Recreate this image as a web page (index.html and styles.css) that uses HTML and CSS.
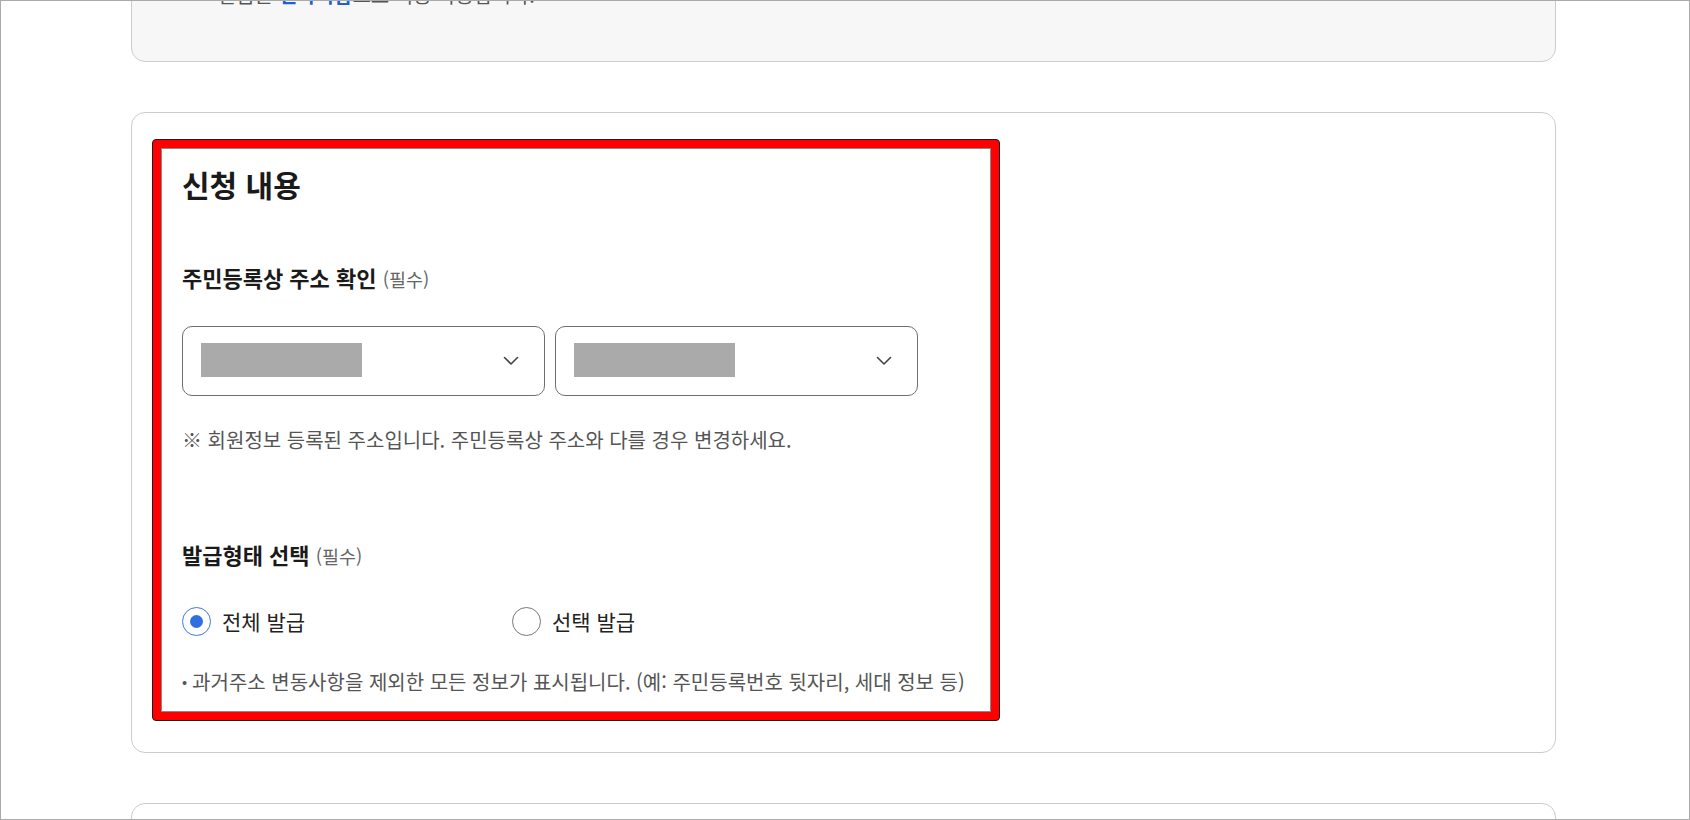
FILE: index.html
```html
<!DOCTYPE html>
<html lang="ko">
<head>
<meta charset="utf-8">
<title>신청 내용</title>
<link rel="stylesheet" href="styles.css">
</head>
<body>
<div class="frame">
  <div class="container">
    <section class="card card-info">
      <p class="info-text">발급은 <span class="link">전자지갑</span>으로 이용 가능합니다.</p>
    </section>

    <section class="card card-form">
      <div class="highlight">
        <div class="panel">
          <h2 class="title">신청 내용</h2>

          <h3 class="label">주민등록상 주소 확인 <span class="req">(필수)</span></h3>
          <div class="selects">
            <div class="select">
              <span class="masked"></span>
              <svg class="chev" width="16" height="10" viewBox="0 0 16 10"><polyline points="1.5,1.5 8,8 14.5,1.5" fill="none" stroke="#444" stroke-width="1.6" stroke-linecap="round" stroke-linejoin="round"/></svg>
            </div>
            <div class="select">
              <span class="masked"></span>
              <svg class="chev" width="16" height="10" viewBox="0 0 16 10"><polyline points="1.5,1.5 8,8 14.5,1.5" fill="none" stroke="#444" stroke-width="1.6" stroke-linecap="round" stroke-linejoin="round"/></svg>
            </div>
          </div>
          <p class="note">※ 회원정보 등록된 주소입니다. 주민등록상 주소와 다를 경우 변경하세요.</p>

          <h3 class="label label-second">발급형태 선택 <span class="req">(필수)</span></h3>
          <div class="radios">
            <label class="radio-opt">
              <span class="radio checked"><span class="dot"></span></span>
              <span class="radio-text">전체 발급</span>
            </label>
            <label class="radio-opt">
              <span class="radio"></span>
              <span class="radio-text">선택 발급</span>
            </label>
          </div>
          <p class="desc"><span class="bullet">•</span>과거주소 변동사항을 제외한 모든 정보가 표시됩니다. (예: 주민등록번호 뒷자리, 세대 정보 등)</p>
        </div>
      </div>
    </section>

    <section class="card card-next"></section>
  </div>
</div>
</body>
</html>
```
FILE: styles.css
```css
html, body {
  margin: 0;
  padding: 0;
  background: #ffffff;
}

body {
  font-family: "Noto Sans CJK KR", "Noto Sans", sans-serif;
  color: #1a1a1a;
}

.frame {
  box-sizing: border-box;
  height: 820px;
  border: 1px solid #aaaaaa;
  overflow: hidden;
}

.container {
  width: 1425px;
  margin-left: 130px;
}

.card {
  box-sizing: border-box;
  border: 1px solid #cccccc;
  border-radius: 14px;
  background: #ffffff;
}

.card-info {
  background: #f7f7f7;
  margin-top: -101px;
  height: 162px;
  padding: 80px 40px 0 86px;
}

.info-text {
  margin: 0;
  font-size: 20px;
  line-height: 28px;
  color: #555555;
}

.link {
  color: #1f5fd6;
  font-weight: 700;
}

.card-form {
  margin-top: 50px;
  padding: 26px 20px 31px;
}

.highlight {
  box-sizing: border-box;
  width: 848px;
  border: 1px solid #1e1e1e;
  border-radius: 4px;
  background: #ff0000;
  padding: 8px;
}

.panel {
  background: #ffffff;
  border: 1px solid #8a8a8a;
  padding: 15px 20px 15px;
}

.title {
  margin: 0;
  height: 40px;
  font-size: 30px;
  line-height: 40px;
  font-weight: 700;
  color: #1a1a1a;
}

.label {
  margin: 58px 0 0;
  height: 30px;
  font-size: 22px;
  line-height: 30px;
  font-weight: 700;
  color: #1a1a1a;
}

.label-second {
  margin-top: 85px;
}

.req {
  font-size: 18.5px;
  line-height: 1;
  font-weight: 400;
  color: #666666;
}

.selects {
  margin-top: 34px;
  display: grid;
  grid-template-columns: 363px 363px;
  gap: 10px;
}

.select {
  box-sizing: border-box;
  height: 70px;
  border: 1px solid #6f6f6f;
  border-radius: 10px;
  display: flex;
  align-items: center;
  justify-content: space-between;
  padding: 0 25px 0 18px;
}

.masked {
  display: block;
  width: 161px;
  height: 34px;
  background: #aaaaaa;
  margin-top: -3px;
}

.chev {
  display: block;
}

.note {
  margin: 30px 0 0;
  height: 28px;
  font-size: 20px;
  line-height: 28px;
  color: #555555;
}

.radios {
  margin-top: 37px;
  display: flex;
  height: 30px;
}

.radio-opt {
  width: 330px;
  display: flex;
  align-items: center;
  gap: 11px;
  font-size: 21px;
  line-height: 30px;
  color: #222222;
}

.radio {
  box-sizing: border-box;
  width: 29px;
  height: 29px;
  border: 1.5px solid #777777;
  border-radius: 50%;
  display: flex;
  align-items: center;
  justify-content: center;
  flex: none;
}

.radio.checked {
  border-color: #3a78e6;
}

.dot {
  width: 13px;
  height: 13px;
  border-radius: 50%;
  background: #2f6fe0;
}

.desc {
  margin: 32px 0 0;
  height: 28px;
  font-size: 20px;
  line-height: 28px;
  color: #555555;
  white-space: nowrap;
}

.bullet {
  display: inline-block;
  line-height: 1;
  font-size: 15px;
  margin-right: 5px;
  vertical-align: 3px;
}

.card-next {
  margin-top: 50px;
  height: 200px;
}
```
